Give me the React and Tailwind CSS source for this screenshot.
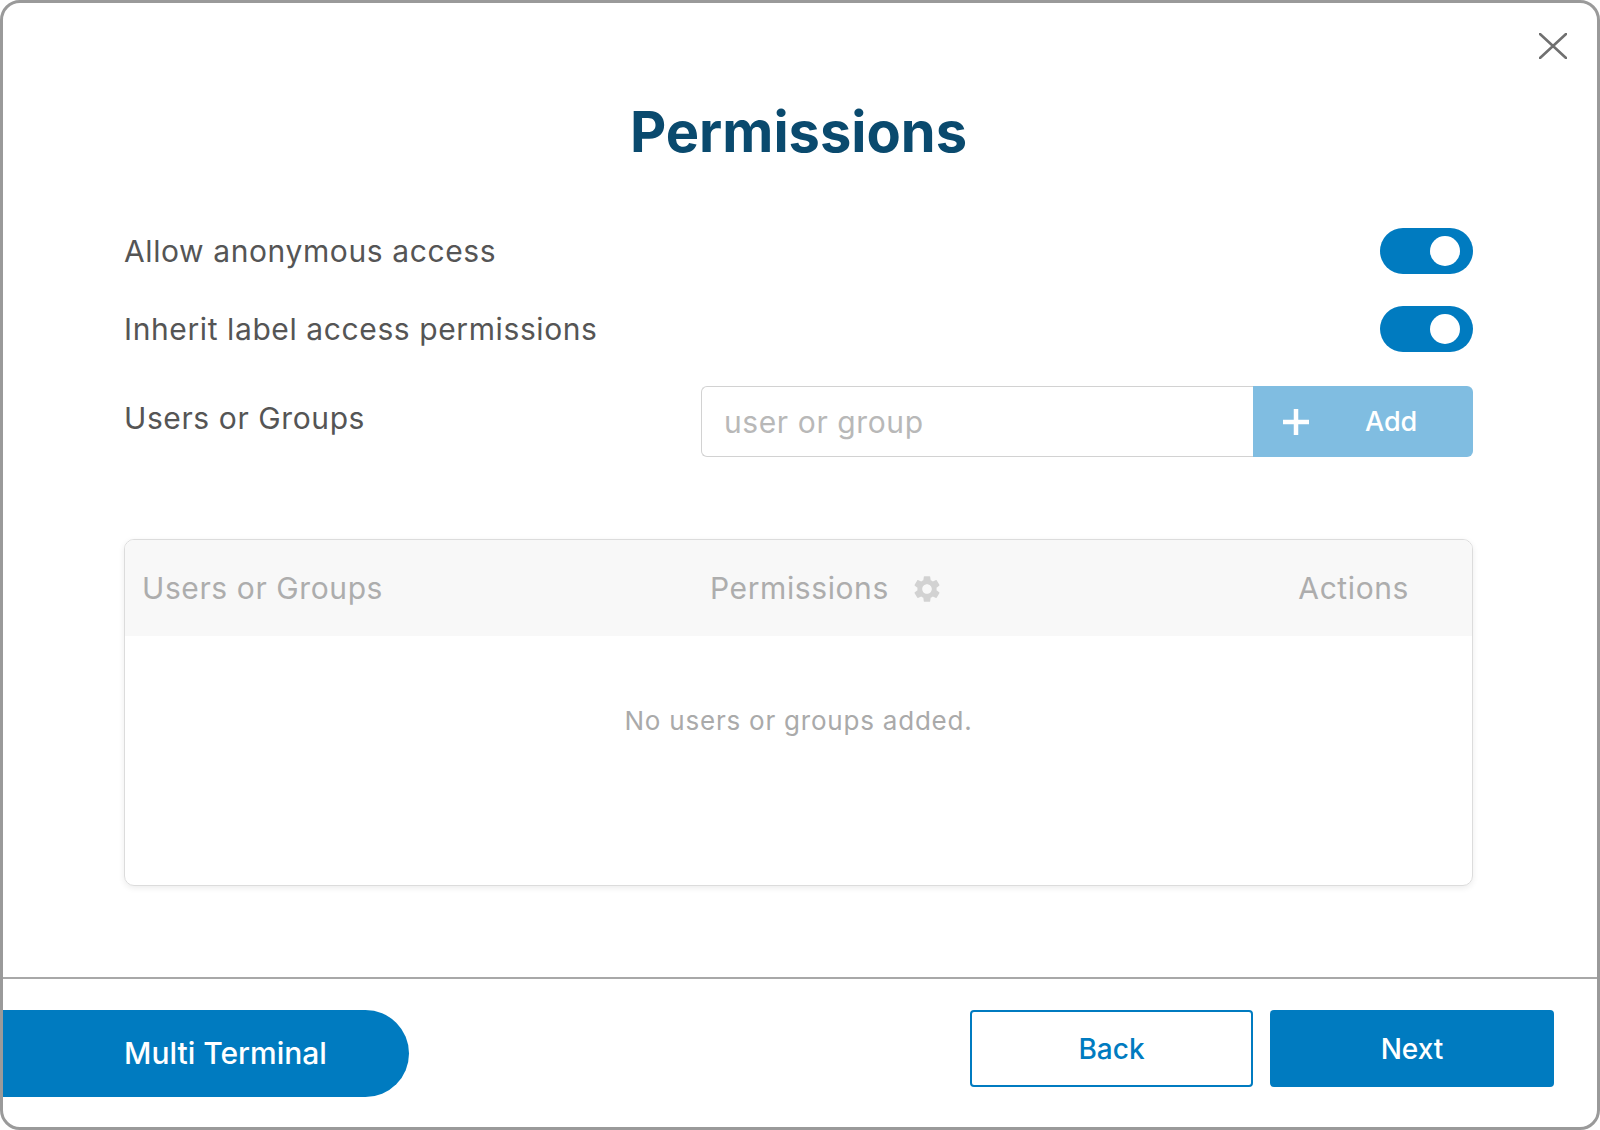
import React from 'react';
import { MdSettings } from 'react-icons/md';

function Toggle() {
  return (
    <div className="flex h-[46px] w-[93px] items-center justify-end rounded-full bg-[#007bc0] pr-[13px]">
      <span className="h-[30px] w-[30px] rounded-full bg-white" />
    </div>
  );
}

function CloseIcon() {
  return (
    <svg width="28" height="26" viewBox="0 0 28 26" className="block">
      <path d="M1 1 L27 25 M27 1 L1 25" stroke="#707070" strokeWidth="2.6" strokeLinecap="round" fill="none" />
    </svg>
  );
}

function PlusIcon() {
  return (
    <svg width="28" height="28" viewBox="0 0 28 28" className="block">
      <path d="M14 1 V27 M1 14 H27" stroke="#ffffff" strokeWidth="4.5" fill="none" />
    </svg>
  );
}

export default function App() {
  return (
    <div className="h-[1130px] w-[1600px] bg-white font-['Inter',sans-serif]">
      <div className="relative flex h-full flex-col overflow-hidden rounded-[20px] border-[3px] border-[#9a9a9a] bg-white">
        <button type="button" className="absolute right-[30px] top-[30px]" aria-label="Close">
          <CloseIcon />
        </button>

        <main className="flex-1 pl-[121px] pr-[124px]">
          <h1 className="mt-[101px] text-center text-[56px] font-bold leading-[56px] text-[#0a4a6e]">Permissions</h1>

          <div className="mt-[68px] flex items-center justify-between">
            <span className="text-[30px] leading-[36px] tracking-[0.02em] text-[#555]">Allow anonymous access</span>
            <Toggle />
          </div>

          <div className="mt-[32px] flex items-center justify-between">
            <span className="text-[30px] leading-[36px] tracking-[0.02em] text-[#555]">Inherit label access permissions</span>
            <Toggle />
          </div>

          <div className="mt-[34px] flex items-start justify-between">
            <span className="pt-[14px] text-[30px] leading-[36px] tracking-[0.02em] text-[#555]">Users or Groups</span>
            <div className="flex">
              <input
                type="text"
                placeholder="user or group"
                className="h-[71px] w-[552px] rounded-l-[6px] border border-r-0 border-[#d2d2d2] pl-[22px] text-[30px] tracking-[0.02em] text-[#555] outline-none placeholder:text-[#b8b8b8]"
              />
              <button type="button" className="flex h-[71px] w-[220px] items-center rounded-r-[6px] bg-[#80bde1] pl-[29px]">
                <PlusIcon />
                <span className="ml-[55px] mt-[2px] text-[27px] font-medium text-white">Add</span>
              </button>
            </div>
          </div>

          <section className="mt-[82px] overflow-hidden rounded-[10px] border border-[#dcdcdc] shadow-[0_2px_6px_rgba(0,0,0,0.08)]">
            <div className="flex h-[96px] items-center bg-[#f8f8f8] pl-[17px] pr-[63px] text-[30px] leading-[36px] tracking-[0.02em] text-[#adadad]">
              <span className="w-[568px]">Users or Groups</span>
              <span className="flex flex-1 items-center">
                Permissions
                <MdSettings className="ml-[22px] mt-[2px] text-[#d2d2d2]" size={32} />
              </span>
              <span>Actions</span>
            </div>
            <div className="h-[249px] pt-[69px] text-center text-[26px] leading-[32px] tracking-[0.03em] text-[#aaa]">
              No users or groups added.
            </div>
          </section>
        </main>

        <footer className="flex h-[150px] items-start border-t-2 border-[#a8a8a8] pt-[31px]">
          <button
            type="button"
            className="flex h-[87px] w-[406px] items-center rounded-r-full bg-[#007bc0] pl-[121px] text-[30px] font-medium text-white"
          >
            Multi Terminal
          </button>
          <div className="ml-auto flex gap-[17px] pr-[43px]">
            <button
              type="button"
              className="h-[77px] w-[283px] rounded-[4px] border-2 border-[#007bc0] bg-white text-[28px] font-medium text-[#007bc0]"
            >
              Back
            </button>
            <button
              type="button"
              className="h-[77px] w-[284px] rounded-[4px] bg-[#007bc0] text-[28px] font-medium text-white"
            >
              Next
            </button>
          </div>
        </footer>
      </div>
    </div>
  );
}
